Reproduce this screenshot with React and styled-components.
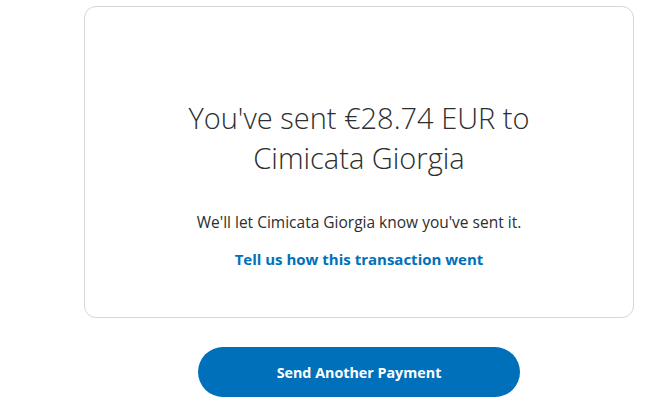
import React from "react";
import styled, { createGlobalStyle } from "styled-components";

const Global = createGlobalStyle`
  html, body { margin: 0; padding: 0; background: #ffffff; }
  body { font-family: "Open Sans", "Liberation Sans", sans-serif; }
`;

const Page = styled.div`
  width: 669px;
  height: 415px;
  padding: 6px 0 0 84px;
  box-sizing: border-box;
  overflow: hidden;
`;

const Column = styled.div`
  width: 550px;
  display: flex;
  flex-direction: column;
  align-items: center;
`;

const Card = styled.section`
  width: 550px;
  height: 312px;
  box-sizing: border-box;
  border: 1px solid #d9d6cf;
  border-radius: 12px;
  padding-top: 91px;
  display: flex;
  flex-direction: column;
  align-items: center;
  text-align: center;
`;

const Heading = styled.h1`
  margin: 0;
  font-family: "Open Sans", sans-serif;
  font-weight: 300;
  font-size: 29px;
  line-height: 40px;
  color: #2c2e2f;
  width: 380px;
`;

const Note = styled.p`
  margin: 33px 0 0;
  font-size: 15.5px;
  line-height: 22px;
  color: #2c2e2f;
`;

const Link = styled.a`
  margin-top: 15px;
  font-size: 15px;
  line-height: 22px;
  font-weight: 700;
  color: #0070ba;
  text-decoration: none;
`;

const Button = styled.button`
  margin-top: 29px;
  width: 322px;
  height: 50px;
  border: none;
  border-radius: 25px;
  background: #0070ba;
  color: #ffffff;
  font-family: "Open Sans", sans-serif;
  font-weight: 700;
  font-size: 14.3px;
`;

export default function App() {
  return (
    <Page>
      <Global />
      <Column>
        <Card>
          <Heading>You've sent €28.74 EUR to Cimicata Giorgia</Heading>
          <Note>We'll let Cimicata Giorgia know you've sent it.</Note>
          <Link href="#">Tell us how this transaction went</Link>
        </Card>
        <Button>Send Another Payment</Button>
      </Column>
    </Page>
  );
}
